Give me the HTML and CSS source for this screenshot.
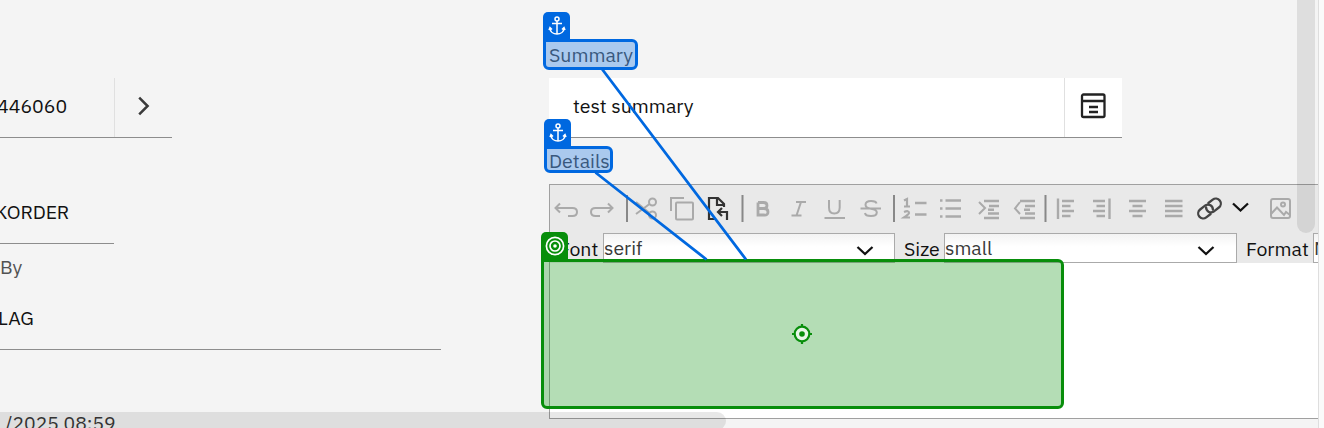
FILE: index.html
```html
<!DOCTYPE html>
<html lang="en">
<head>
<meta charset="utf-8">
<title>Record details</title>
<link rel="stylesheet" href="styles.css">
</head>
<body>
<main class="page">
  <section class="col-left">
    <div class="field field-nav">
      <span class="value num">446060</span>
      <span class="nav"><svg width="14" height="20" viewBox="0 0 14 20"><path d="M2.2 1.7 10.600 10 2.200 18.300" fill="none" stroke="#3a3a3a" stroke-width="2.500"/></svg></span>
    </div>
    <div class="field field-order"><span class="value order">KORDER</span></div>
    <div class="label">By</div>
    <div class="field field-flag"><span class="value flag">LAG</span></div>
    <div class="date">/2025 08:59</div>
  </section>
  <section class="col-right">
    <div class="label summary-label"><span>Summary</span></div>
    <div class="summary">
      <span class="summary-text">test summary</span>
      <span class="summary-btn"><svg width="26" height="26" viewBox="0 0 26 26" fill="none" stroke="#222" stroke-width="2.300"><rect x="2" y="1.500" width="22.500" height="22.500" rx="1.500"/><path d="M2 8h22M9 14h9M9 19h9"/></svg></span>
    </div>
    <div class="label details-label"><span>Details</span></div>
    <div class="editor">
      <div class="tools">
        <svg class="icons" width="768" height="48" viewBox="550 185 768 48" fill="none" stroke="#aaa" stroke-width="2">
          <path d="M560 203.500 555.500 208 560 212.500M555.500 208H572.500Q577 208 577 212T572.500 216H568"/>
          <path d="M608 203.500 612.500 208 608 212.500M612.500 208H595.500Q591 208 591 212T595.500 216H600"/>
          <path class="sep" d="M627 195V222M742.500 195V222M894 195V222M1045.500 195V222"/>
          <circle cx="652.500" cy="202" r="3.500"/><circle cx="652.500" cy="215" r="3.500"/>
          <path d="M636 202 649.500 213M636 214 649.500 204"/>
          <rect x="676" y="202.500" width="17" height="17" rx="1"/><path d="M671 211V198H684"/>
          <g stroke="#333" stroke-width="2.200"><path d="M716 219H709V198H718L724 204V207M717 198V205H724"/><path d="M722 208 718 212 722 216M718 212H727V220"/></g>
          <path stroke-width="2.800" d="M758 202.500H763.500Q767 202.500 767 205.500T763.500 208.500H758V202.500M758 208.500H764Q768 208.500 768 212T764 215H758V208.500"/>
          <path d="M796 202H806M791.500 215.500H801.500M801 202 796.500 215.500"/>
          <path d="M829 200V207.500Q829 213.500 834.300 213.500T839.700 207.500V200M824.500 218H845"/>
          <path d="M876.500 203.500Q876 201 871 201 865.500 201 865.500 204.800 865.500 208 871 208.700 876.800 209.500 876.800 212.500 876.800 216 871 216 865.500 216 865 213M860.500 208.500H881"/>
          <path stroke-width="2.200" d="M904 200.500 907 199V206.500M904 206.500H910M904 212Q909 210 909 213 909 214 904 217.500H910"/>
          <path class="bars" d="M915 203H926.500M915 214.500H926.500M945.500 200.500H961M945.500 208.500H961M945.500 216.500H961M940 200.500H942.500M940 208.500H942.500M940 216.500H942.500"/>
          <path d="M979 202 985 208 979 214M1020 202 1015 208.500 1020 214"/>
          <path class="bars" d="M984 201H999M989 206H999M988 209.700H994M988 213.500H999M984 218H999M1020 201H1035M1025 206H1035M1024 209.700H1030M1025 213.500H1035M1020 218H1035"/>
          <path class="bars" d="M1058 198.500V219M1062 201H1074M1062 206H1070.500M1062 211H1074M1062 216H1070.500"/>
          <path class="bars" d="M1109.500 198.500V219M1093 201H1105M1096.500 206H1105M1093 211H1105M1096.500 216H1105"/>
          <path class="bars" d="M1129 201H1146M1132.500 206H1142.500M1129 211H1146M1132.500 216H1142.500M1165 201H1182.500M1165 206H1182.500M1165 211H1182.500M1165 216H1182.500"/>
          <g stroke="#444" stroke-width="2.300" stroke-linecap="round" transform="rotate(-38 1209.500 208.500)"><path d="M1207 213.500H1201.500A5 5 0 0 1 1201.500 203.500H1208.500A5 5 0 0 1 1211.500 211.500"/><path d="M1212 203.500H1217.500A5 5 0 0 1 1217.500 213.500H1210.500A5 5 0 0 1 1207.500 205.500"/></g>
          <path stroke="#111" stroke-width="2.300" d="M1233 203.500 1240.500 210.500 1248 203.500"/>
          <rect x="1271" y="199" width="19" height="19" rx="2"/><circle cx="1283" cy="204.500" r="2"/><path d="M1271 214 1277 207.500 1284 215 1286 212 1290 215"/>
        </svg>
      </div>
      <div class="selects">
        <span class="name font">Font</span>
        <span class="select"><span class="serif">serif</span><svg class="chev" width="18" height="12" viewBox="0 0 18 12"><path d="M1.500 2 9 9 16.500 2" fill="none" stroke="#111" stroke-width="2.300"/></svg></span>
        <span class="name size">Size</span>
        <span class="select select-size"><span class="small">small</span><svg class="chev" width="18" height="12" viewBox="0 0 18 12"><path d="M1.500 2 9 9 16.500 2" fill="none" stroke="#111" stroke-width="2.300"/></svg></span>
        <span class="name format">Format</span>
        <span class="select select-format">Normal</span>
      </div>
      <div class="canvas"></div>
    </div>
  </section>
  <aside class="edge"></aside>
</main>
<div class="scroll-v"></div>
<div class="scroll-h"></div>
<div class="overlay">
  <div class="tag tag-summary"><svg width="18" height="20" viewBox="0 0 18 20"><g fill="none" stroke="#fff" stroke-width="1.500"><circle cx="9" cy="3" r="2"/><path d="M9 5V18M4 7.500H14"/><path d="M2 12C2 20 16 20 16 12M1 14 2 11.500 4 13.500M14 13.500 16 11.500 17 14"/></g></svg></div>
  <div class="box box-summary"></div>
  <div class="tag tag-details"><svg width="18" height="20" viewBox="0 0 18 20"><g fill="none" stroke="#fff" stroke-width="1.500"><circle cx="9" cy="3" r="2"/><path d="M9 5V18M4 7.500H14"/><path d="M2 12C2 20 16 20 16 12M1 14 2 11.500 4 13.500M14 13.500 16 11.500 17 14"/></g></svg></div>
  <div class="box box-details"></div>
  <div class="tag tag-target"><svg width="20" height="20" viewBox="0 0 20 20" fill="none" stroke="#fff" stroke-width="1.700"><circle cx="10" cy="10" r="8.600"/><circle cx="10" cy="10" r="5"/><circle cx="10" cy="10" r="1.800" fill="#fff" stroke="none"/></svg></div>
  <div class="box box-target"><svg width="22" height="22" viewBox="0 0 22 22"><circle cx="11" cy="11" r="7.300" fill="#e8f5e8" stroke="#088e0b" stroke-width="2.200"/><circle cx="11" cy="11" r="2.800" fill="#088e0b"/><path d="M11 1V4M11 18V21M1 11H4M18 11H21" stroke="#088e0b" stroke-width="2.200"/></svg></div>
  <svg class="links" width="1324" height="428"><path d="M602 69 746 259.500M595.500 172.500 706.500 259.500" stroke="#0068e0" stroke-width="2.800" fill="none"/></svg>
</div>
</body>
</html>
```
FILE: styles.css
```css
* { box-sizing: border-box; }
body {
  margin: 0;
  width: 1324px;
  height: 428px;
  position: relative;
  overflow: hidden;
  background: #f4f4f4;
  font: 19.5px/24px "IBM Plex Sans", "Noto Sans", sans-serif;
  color: #111;
}
svg { display: block; flex: none; }
span { white-space: nowrap; }
.page { display: flex; height: 428px; }

.col-left { width: 549px; flex: none; padding-top: 78px; overflow: hidden; }
.field { display: flex; align-items: center; height: 60px; border-bottom: 1px solid #8d8d8d; }
.field-nav { width: 172px; }
.num { width: 115px; height: 59px; line-height: 56px; border-right: 1px solid #e0e0e0; text-indent: -3px; }
.nav { flex: 1; display: flex; justify-content: center; padding-bottom: 3px; padding-left: 1px; }
.field-order { width: 114px; margin-top: 46px; padding-bottom: 3px; }
.order { text-indent: -5px; letter-spacing: -.15px; }
.label { color: #525252; }
.col-left .label { margin-top: 11px; height: 24px; }
.field-flag { width: 441px; margin-top: 11px; padding-bottom: 4px; }
.flag { text-indent: -2px; }
.date { margin-top: 61px; padding-left: 5px; color: #393939; font-size: 19.4px; }

.col-right { width: 769px; flex: none; padding-top: 43px; overflow: hidden; }
.summary-label { height: 35px; }
.summary { display: flex; width: 573px; height: 60px; background: #fff; border-bottom: 1px solid #8d8d8d; }
.summary-text { flex: 1; padding-left: 24px; line-height: 56px; }
.summary-btn { width: 58px; border-left: 1px solid #e0e0e0; display: flex; align-items: center; justify-content: center; padding: 0 1px 3px 0; }
.details-label { height: 46px; padding-top: 11px; }

.editor { width: 790px; height: 235px; border: 1px solid #a0a0a0; background: #fff; }
.tools { height: 48px; background: #e9e9e9; }
.sep { stroke: #888; }
.bars { stroke-width: 2.4; }
.selects { display: flex; align-items: stretch; height: 30px; background: #e9e9e9; line-height: 32px; }
.name { flex: none; height: 30px; }
.font { width: 53px; padding-left: 9px; }
.size { width: 49px; padding-left: 9px; }
.format { width: 76px; padding-left: 9px; }
.select {
  width: 292px;
  height: 30px;
  flex: none;
  display: flex;
  align-items: center;
  justify-content: space-between;
  padding: 0 20px 0 0;
  border: 1px solid #aaa;
  background: linear-gradient(#f3f3f3, #fff 45%);
  color: #393939;
  font-size: 19.4px;
  line-height: 28px;
}
.chev { margin-top: 6px; }
.select-size { width: 293px; padding-right: 21px; }
.canvas { height: 155px; background: #fff; }
.edge { width: 6px; flex: none; border-left: 1px solid #dedede; background: #fafafa; }

.scroll-v { position: absolute; left: 1297px; top: -10px; width: 18px; height: 243px; border-radius: 9px; background: rgba(0, 0, 0, .09); }
.scroll-h { position: absolute; left: -10px; top: 412px; width: 736px; height: 18px; border-radius: 9px; background: rgba(0, 0, 0, .09); }

.overlay { position: absolute; inset: 0; }
.tag { position: absolute; width: 27px; height: 28px; border-radius: 5px 5px 0 0; background: #0068e0; display: flex; justify-content: center; padding-top: 4px; }
.tag-summary { left: 543px; top: 12px; }
.tag-details { left: 544px; top: 119px; }
.tag-target { left: 541px; top: 232px; background: #088e0b; }
.box { position: absolute; border: 3px solid #0068e0; border-radius: 0 6px 6px 6px; background: rgba(0, 104, 224, .3); }
.box-summary { left: 543px; top: 39px; width: 95px; height: 31px; }
.box-details { left: 544px; top: 146px; width: 69px; height: 27px; }
.box-target { left: 541px; top: 259px; width: 523px; height: 150px; display: flex; align-items: center; justify-content: center; padding-right: 1px; border-color: #088e0b; background: rgba(8, 142, 11, .3); }
.links { position: absolute; left: 0; top: 0; }
```
